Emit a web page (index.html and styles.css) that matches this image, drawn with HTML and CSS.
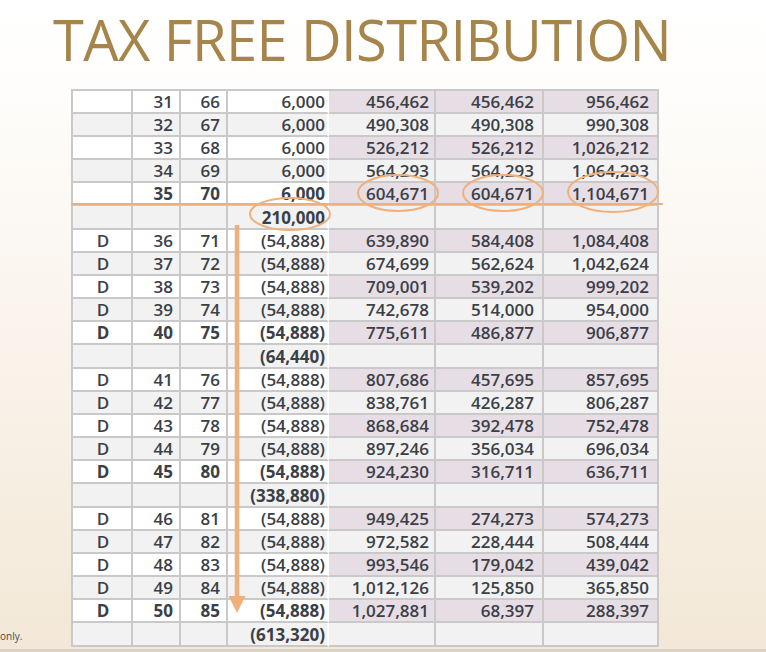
FILE: index.html
```html
<!DOCTYPE html>
<html>
<head>
<meta charset="utf-8">
<link rel="stylesheet" href="styles.css">
</head>
<body>
<div class="slide">
  <h1 class="title">TAX FREE DISTRIBUTION</h1>
  <div class="content">
    <div class="side"><span class="note">only.</span></div>
    <div class="table-wrap">
      <table class="grid">
        <colgroup>
          <col class="c1"><col class="c2"><col class="c3"><col class="c4"><col class="c5"><col class="c6"><col class="c7">
        </colgroup>
        <tbody>
          <tr class="odd"><td class="d"></td><td class="age">31</td><td class="age">66</td><td class="amt">6,000</td><td class="v1">456,462</td><td class="v2">456,462</td><td class="v3">956,462</td></tr>
          <tr class="even"><td class="d"></td><td class="age">32</td><td class="age">67</td><td class="amt">6,000</td><td class="v1">490,308</td><td class="v2">490,308</td><td class="v3">990,308</td></tr>
          <tr class="odd"><td class="d"></td><td class="age">33</td><td class="age">68</td><td class="amt">6,000</td><td class="v1">526,212</td><td class="v2">526,212</td><td class="v3">1,026,212</td></tr>
          <tr class="even"><td class="d"></td><td class="age">34</td><td class="age">69</td><td class="amt">6,000</td><td class="v1">564,293</td><td class="v2">564,293</td><td class="v3">1,064,293</td></tr>
          <tr class="odd strong"><td class="d"></td><td class="age">35</td><td class="age">70</td><td class="amt">6,000</td><td class="v1">604,671</td><td class="v2">604,671</td><td class="v3">1,104,671</td></tr>
          <tr class="even total"><td class="d"></td><td class="age"></td><td class="age"></td><td class="amt">210,000</td><td class="v1"></td><td class="v2"></td><td class="v3"></td></tr>

          <tr class="odd"><td class="d">D</td><td class="age">36</td><td class="age">71</td><td class="amt">(54,888)</td><td class="v1">639,890</td><td class="v2">584,408</td><td class="v3">1,084,408</td></tr>
          <tr class="even"><td class="d">D</td><td class="age">37</td><td class="age">72</td><td class="amt">(54,888)</td><td class="v1">674,699</td><td class="v2">562,624</td><td class="v3">1,042,624</td></tr>
          <tr class="odd"><td class="d">D</td><td class="age">38</td><td class="age">73</td><td class="amt">(54,888)</td><td class="v1">709,001</td><td class="v2">539,202</td><td class="v3">999,202</td></tr>
          <tr class="even"><td class="d">D</td><td class="age">39</td><td class="age">74</td><td class="amt">(54,888)</td><td class="v1">742,678</td><td class="v2">514,000</td><td class="v3">954,000</td></tr>
          <tr class="odd strong"><td class="d">D</td><td class="age">40</td><td class="age">75</td><td class="amt">(54,888)</td><td class="v1">775,611</td><td class="v2">486,877</td><td class="v3">906,877</td></tr>
          <tr class="even total"><td class="d"></td><td class="age"></td><td class="age"></td><td class="amt">(64,440)</td><td class="v1"></td><td class="v2"></td><td class="v3"></td></tr>

          <tr class="odd"><td class="d">D</td><td class="age">41</td><td class="age">76</td><td class="amt">(54,888)</td><td class="v1">807,686</td><td class="v2">457,695</td><td class="v3">857,695</td></tr>
          <tr class="even"><td class="d">D</td><td class="age">42</td><td class="age">77</td><td class="amt">(54,888)</td><td class="v1">838,761</td><td class="v2">426,287</td><td class="v3">806,287</td></tr>
          <tr class="odd"><td class="d">D</td><td class="age">43</td><td class="age">78</td><td class="amt">(54,888)</td><td class="v1">868,684</td><td class="v2">392,478</td><td class="v3">752,478</td></tr>
          <tr class="even"><td class="d">D</td><td class="age">44</td><td class="age">79</td><td class="amt">(54,888)</td><td class="v1">897,246</td><td class="v2">356,034</td><td class="v3">696,034</td></tr>
          <tr class="odd strong"><td class="d">D</td><td class="age">45</td><td class="age">80</td><td class="amt">(54,888)</td><td class="v1">924,230</td><td class="v2">316,711</td><td class="v3">636,711</td></tr>
          <tr class="even total"><td class="d"></td><td class="age"></td><td class="age"></td><td class="amt">(338,880)</td><td class="v1"></td><td class="v2"></td><td class="v3"></td></tr>

          <tr class="odd"><td class="d">D</td><td class="age">46</td><td class="age">81</td><td class="amt">(54,888)</td><td class="v1">949,425</td><td class="v2">274,273</td><td class="v3">574,273</td></tr>
          <tr class="even"><td class="d">D</td><td class="age">47</td><td class="age">82</td><td class="amt">(54,888)</td><td class="v1">972,582</td><td class="v2">228,444</td><td class="v3">508,444</td></tr>
          <tr class="odd"><td class="d">D</td><td class="age">48</td><td class="age">83</td><td class="amt">(54,888)</td><td class="v1">993,546</td><td class="v2">179,042</td><td class="v3">439,042</td></tr>
          <tr class="even"><td class="d">D</td><td class="age">49</td><td class="age">84</td><td class="amt">(54,888)</td><td class="v1">1,012,126</td><td class="v2">125,850</td><td class="v3">365,850</td></tr>
          <tr class="odd strong"><td class="d">D</td><td class="age">50</td><td class="age">85</td><td class="amt">(54,888)</td><td class="v1">1,027,881</td><td class="v2">68,397</td><td class="v3">288,397</td></tr>
          <tr class="even total"><td class="d"></td><td class="age"></td><td class="age"></td><td class="amt">(613,320)</td><td class="v1"></td><td class="v2"></td><td class="v3"></td></tr>
        </tbody>
      </table>
      <svg class="marks" width="600" height="560" viewBox="0 0 600 560" aria-hidden="true">
        <g fill="none" stroke="#f0b07c" stroke-width="2">
          <line x1="0" y1="115" x2="592" y2="115"/>
          <ellipse cx="219" cy="125" rx="40" ry="16"/>
          <ellipse cx="327" cy="104" rx="40" ry="18"/>
          <ellipse cx="432" cy="104" rx="40" ry="18"/>
          <ellipse cx="542" cy="103" rx="45" ry="20"/>
        </g>
        <line x1="166" y1="136" x2="166" y2="508" stroke="#f0b07c" stroke-width="4.5"/>
        <polygon points="157.5,507 174.5,507 166,524" fill="#f0b07c"/>
      </svg>
    </div>
  </div>
</div>
</body>
</html>
```

FILE: styles.css
```css
* { box-sizing: border-box; }
html, body { margin: 0; padding: 0; }
body { width: 766px; height: 652px; overflow: hidden; }

.slide {
  width: 766px;
  height: 652px;
  background: linear-gradient(to bottom, #ffffff 0%, #fefdfb 15%, #faf5ee 45%, #f3e8d7 100%);
  border-bottom: 3px solid #dcd2c4;
  display: flex;
  flex-direction: column;
  overflow: hidden;
}

.title {
  flex-shrink: 0;
  margin: 0;
  padding: 4px 0 0 53px;
  height: 89px;
  font-family: "Open Sans", sans-serif;
  font-weight: 400;
  font-size: 56px;
  line-height: 70px;
  letter-spacing: -0.6px;
  color: #a6854a;
  white-space: nowrap;
}

.content {
  display: flex;
  flex: 1;
  min-height: 0;
}

.side {
  width: 71px;
  display: flex;
  align-items: flex-end;
  justify-content: flex-start;
  padding: 0 0 6px 0;
}
.note {
  font-family: "Open Sans", sans-serif;
  font-size: 10px;
  color: #4a4a4a;
  white-space: nowrap;
}

.table-wrap {
  position: relative;
  align-self: flex-start;
}

.grid {
  border-collapse: separate;
  border-spacing: 0;
  table-layout: fixed;
  width: 586px;
  border-top: 2px solid #c9c9c9;
  border-left: 2px solid #c9c9c9;
  font-family: "Open Sans", sans-serif;
  font-weight: 600;
  font-size: 17px;
  color: #3b4046;
}
.c1 { width: 60px; }
.c2 { width: 48px; }
.c3 { width: 47px; }
.c4 { width: 101px; }
.c5 { width: 107px; }
.c6 { width: 108px; }
.c7 { width: 115px; }

.grid tr { height: 23px; }
.grid tr.total { height: 24px; }

.grid td {
  padding: 1px 6px 0 0;
  border-right: 2px solid #c9c9c9;
  border-bottom: 2px solid #c9c9c9;
  text-align: right;
  line-height: 18px;
  white-space: nowrap;
  overflow: hidden;
}
.grid td.d { text-align: center; padding: 1px 0 0 2px; }
.grid td.amt { padding-right: 2px; border-right-color: #ffffff; }
.grid td.v1 { padding-right: 5px; }
.grid td.v2 { padding-right: 8px; }
.grid td.v3 { padding-right: 8px; }

.grid tr.odd td { background: #ffffff; }
.grid tr.even td { background: #f1f2f1; }
.grid tr.odd td.v1, .grid tr.odd td.v2, .grid tr.odd td.v3 { background: #e7dde5; }

.grid tr.strong td.d,
.grid tr.strong td.age,
.grid tr.strong td.amt,
.grid tr.total td.amt { font-weight: 700; }

.marks {
  position: absolute;
  left: 0;
  top: 0;
  overflow: visible;
  pointer-events: none;
}
```
